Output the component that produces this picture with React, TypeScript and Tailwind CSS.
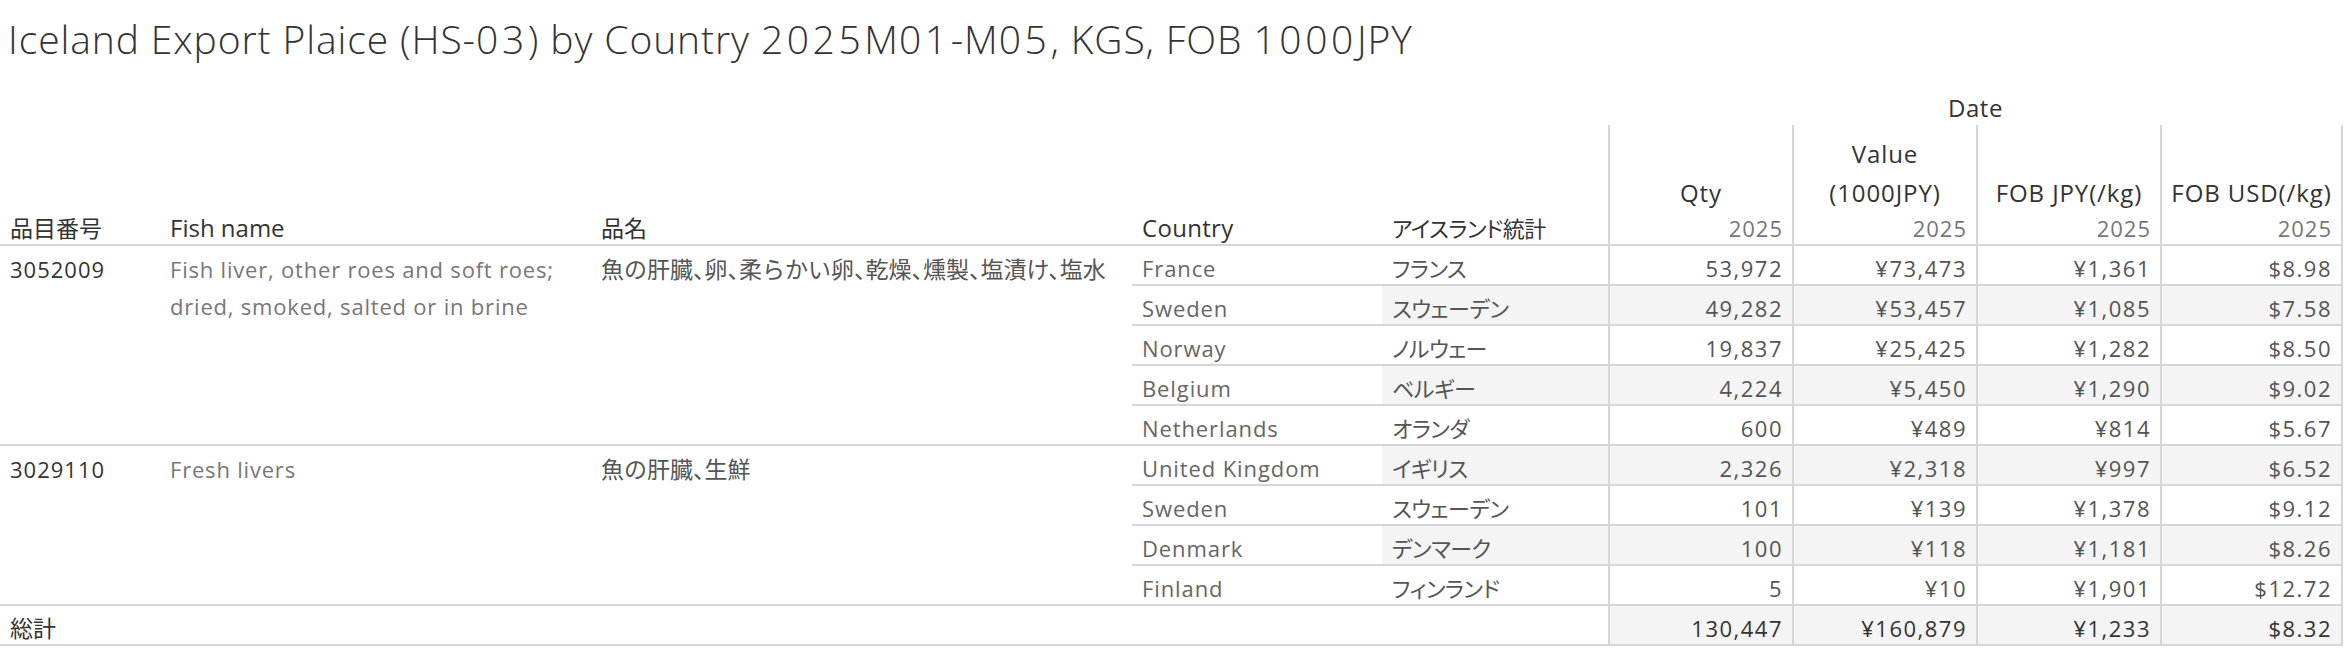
import React from 'react'

type Row = {
  country: string
  jp: string
  qty: string
  value: string
  fobJpy: string
  fobUsd: string
}

type Group = {
  code: string
  fishName: string[]
  jpName: string
  rows: Row[]
}

const groups: Group[] = [
  {
    code: '3052009',
    fishName: ['Fish liver, other roes and soft roes;', 'dried, smoked, salted or in brine'],
    jpName: '魚の肝臓、卵、柔らかい卵、乾燥、燻製、塩漬け、塩水',
    rows: [
      { country: 'France', jp: 'フランス', qty: '53,972', value: '¥73,473', fobJpy: '¥1,361', fobUsd: '$8.98' },
      { country: 'Sweden', jp: 'スウェーデン', qty: '49,282', value: '¥53,457', fobJpy: '¥1,085', fobUsd: '$7.58' },
      { country: 'Norway', jp: 'ノルウェー', qty: '19,837', value: '¥25,425', fobJpy: '¥1,282', fobUsd: '$8.50' },
      { country: 'Belgium', jp: 'ベルギー', qty: '4,224', value: '¥5,450', fobJpy: '¥1,290', fobUsd: '$9.02' },
      { country: 'Netherlands', jp: 'オランダ', qty: '600', value: '¥489', fobJpy: '¥814', fobUsd: '$5.67' },
    ],
  },
  {
    code: '3029110',
    fishName: ['Fresh livers'],
    jpName: '魚の肝臓、生鮮',
    rows: [
      { country: 'United Kingdom', jp: 'イギリス', qty: '2,326', value: '¥2,318', fobJpy: '¥997', fobUsd: '$6.52' },
      { country: 'Sweden', jp: 'スウェーデン', qty: '101', value: '¥139', fobJpy: '¥1,378', fobUsd: '$9.12' },
      { country: 'Denmark', jp: 'デンマーク', qty: '100', value: '¥118', fobJpy: '¥1,181', fobUsd: '$8.26' },
      { country: 'Finland', jp: 'フィンランド', qty: '5', value: '¥10', fobJpy: '¥1,901', fobUsd: '$12.72' },
    ],
  },
]

const totals = ['130,447', '¥160,879', '¥1,233', '$8.32']

// measure columns: header lines + widths (last one carries the right edge line)
const measures = [
  { label: ['Qty'], w: 'w-[184px]' },
  { label: ['Value', '(1000JPY)'], w: 'w-[184px]' },
  { label: ['FOB JPY(/kg)'], w: 'w-[184px]' },
  { label: ['FOB USD(/kg)'], w: 'w-[183px] border-r-2' },
]

const kana = "text-[22px] tracking-[-0.5px] [font-feature-settings:'palt']"
const kanji = "text-[23px] tracking-normal [font-feature-settings:'halt']"
const num = 'tracking-[1.5px]'

// digits in the title run wider than Open Sans
function D({ children }: { children: string }) {
  return <span className="tracking-[3.6px]">{children}</span>
}

function MeasureCells({ values, shaded, dark }: { values: string[]; shaded: boolean; dark?: boolean }) {
  return (
    <>
      {values.map((v, i) => (
        <div
          key={i}
          className={`${measures[i].w} border-l-2 border-[#d6d6d6] flex items-center justify-end pr-[9px] pt-[7px] ${num} ${
            shaded ? 'bg-[#f4f4f4]' : ''
          } ${dark ? 'text-[#333]' : 'text-[#555]'}`}
        >
          {v}
        </div>
      ))}
    </>
  )
}

export default function App() {
  let band = 0

  return (
    <div className="w-[2348px] h-[648px] overflow-hidden bg-white text-[22px] text-[#333] font-['Open_Sans','Noto_Sans_CJK_JP',sans-serif]">
      <div className="h-[84px] pb-[5px] flex items-center pl-[8px] text-[39px] font-light tracking-[0.9px] text-[#333] whitespace-nowrap">
        <span>
          Iceland Export Plaice (HS-<D>03</D>) by Country <D>2025</D>M<D>01</D>-M<D>05</D>, KGS, FOB{' '}
          <D>1000</D>JPY
        </span>
      </div>

      {/* header */}
      <div className="w-[2343px] flex border-b-2 border-[#d6d6d6]">
        <div className="w-[1608px] flex items-end text-[24px]">
          <div className="w-[160px] pl-[10px] leading-[32px]">
            <span className={kanji}>品目番号</span>
          </div>
          <div className="w-[431px] pl-[10px] leading-[32px]">Fish name</div>
          <div className="w-[541px] pl-[10px] leading-[32px]">
            <span className={kanji}>品名</span>
          </div>
          <div className="w-[250px] pl-[10px] leading-[32px] tracking-[0.3px]">Country</div>
          <div className="w-[226px] pl-[10px] leading-[32px] whitespace-nowrap">
            <span className={kana}>アイスランド統計</span>
          </div>
        </div>
        <div className="w-[735px] flex flex-col">
          <div className="h-[41px] pt-[7px] flex items-center justify-center text-[24px] tracking-[0.5px]">Date</div>
          <div className="h-[119px] flex">
            {measures.map((m, i) => (
              <div key={i} className={`${m.w} border-l-2 border-[#d6d6d6] flex flex-col justify-end`}>
                {m.label.map((l) => (
                  <div key={l} className="leading-[39px] text-center whitespace-nowrap text-[24px] tracking-[0.9px]">
                    {l}
                  </div>
                ))}
                <div className="leading-[32px] text-right pr-[9px] text-[#777] tracking-[1px]">2025</div>
              </div>
            ))}
          </div>
        </div>
      </div>

      {/* body */}
      {groups.map((g) => (
        <div key={g.code} className="w-[2343px] flex border-b-2 border-[#d6d6d6]">
          <div className="w-[160px] pl-[10px] pt-[5px] leading-[37px] text-[#333] tracking-[1px]">{g.code}</div>
          <div className="w-[431px] pl-[10px] pt-[5px] leading-[37px] text-[#777] tracking-[0.8px]">
            {g.fishName.map((l) => (
              <div key={l} className="whitespace-nowrap">
                {l}
              </div>
            ))}
          </div>
          <div className="w-[541px] pl-[10px] pt-[5px] leading-[37px] text-[#555] whitespace-nowrap">
            <span className={kanji}>{g.jpName}</span>
          </div>
          <div className="w-[1211px] flex flex-col">
            {g.rows.map((r, i) => {
              const last = i === g.rows.length - 1
              const shaded = band++ % 2 === 1
              return (
                <div
                  key={r.country}
                  className={`flex ${last ? 'h-[38px]' : 'h-[40px] border-b-2 border-[#d6d6d6]'}`}
                >
                  <div className="w-[250px] pl-[10px] pt-[7px] flex items-center text-[#666] tracking-[0.9px] whitespace-nowrap">
                    {r.country}
                  </div>
                  <div
                    className={`w-[226px] pl-[10px] pt-[7px] flex items-center text-[#555] whitespace-nowrap ${
                      shaded ? 'bg-[#f4f4f4]' : ''
                    }`}
                  >
                    <span className={kana}>{r.jp}</span>
                  </div>
                  <MeasureCells values={[r.qty, r.value, r.fobJpy, r.fobUsd]} shaded={shaded} />
                </div>
              )
            })}
          </div>
        </div>
      ))}

      {/* grand total */}
      <div className="w-[2343px] h-[40px] flex border-b-2 border-[#d6d6d6]">
        <div className="w-[1608px] pl-[10px] pt-[7px] flex items-center">
          <span className={kanji}>総計</span>
        </div>
        <MeasureCells values={totals} shaded dark />
      </div>
    </div>
  )
}
